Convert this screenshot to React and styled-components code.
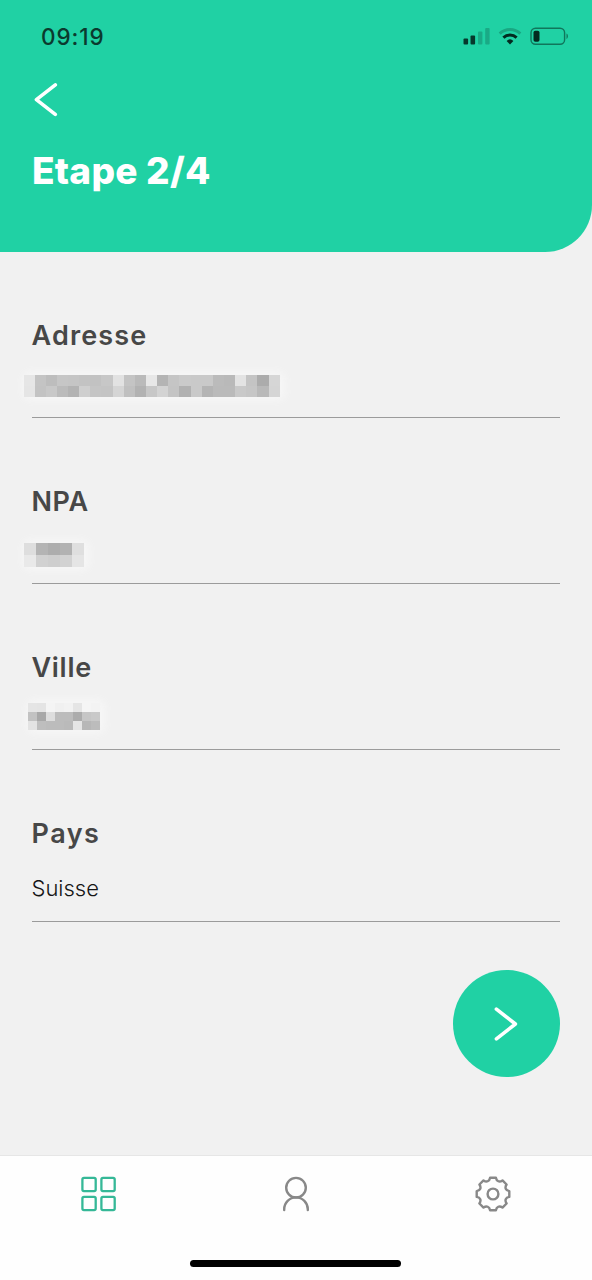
import React from 'react'
import styled, { createGlobalStyle } from 'styled-components';

const GREEN = '#20d1a4'

const GlobalStyle = createGlobalStyle`
  * {
    box-sizing: border-box;
  }
  body {
    margin: 0;
    background-color: #f1f1f1;
    font-family: Inter, "Liberation Sans", sans-serif;
  }
  button {
    border: none;
    padding: 0;
    background: none;
    font: inherit;
  }
  svg {
    display: block;
  }
`

const Screen = styled.div`
  display: flex;
  flex-direction: column;
  height: 1280px;
  overflow: hidden;
`

const Header = styled.header`
  height: 252px;
  background-color: ${GREEN};
  border-bottom-right-radius: 47px;
`

const StatusBar = styled.div`
  display: flex;
  justify-content: space-between;
  height: 83px;
  padding: 24px 23px 0 41px;
`

const Time = styled.div`
  color: #0b3a2e;
  font-size: 22.5px;
  font-weight: 500;
  line-height: 26px;
  letter-spacing: 0.9px;
`

const BackButton = styled.button`
  display: block;
  margin-left: 34px;
`

const Title = styled.h1`
  margin: 32px 0 0 32px;
  color: #fff;
  font-size: 37px;
  font-weight: 800;
  line-height: 44px;
  letter-spacing: 0.25px;
`

const Form = styled.main`
  flex: 1;
  padding: 0 32.5px 0 31.5px;
`

const Field = styled.div`
  height: ${(props) => props.$height || 166}px;
  padding-top: 67px;
  border-bottom: 1px solid #9b9b9b;
`

const Label = styled.div`
  color: #474747;
  font-size: 27px;
  font-weight: 600;
  line-height: 34px;
  letter-spacing: ${(props) => props.$spacing}px;
`

const Value = styled.div`
  margin-top: 23px;
  color: #151515;
  font-size: 22px;
  font-weight: 300;
  line-height: 28px;
`

// value hidden behind a mosaic of grey cells
const Mosaic = styled.div`
  display: grid;
  width: max-content;
  grid-template-columns: repeat(${(props) => props.$cols}, ${(props) => props.$size}px);
  grid-auto-rows: ${(props) => props.$rowSize}px;
  margin: ${(props) => props.$top}px 0 0 ${(props) => props.$left}px;
  border-radius: 5px;
  box-shadow: 2px 0 7px 4px #f6f6f6;
  background-color: #f4f4f4;
`

const Cell = styled.span`
  background-color: ${(props) => props.$color};
`

const NextButton = styled.button`
  display: flex;
  align-items: center;
  justify-content: center;
  width: 107px;
  height: 107px;
  margin: 48px 0 0 auto;
  border-radius: 50%;
  background-color: ${GREEN};
`

const TabBar = styled.nav`
  display: flex;
  flex-direction: column;
  align-items: center;
  height: 125px;
  padding-right: 1px;
  border-top: 1px solid #e6e6e6;
  background-color: #fefefe;
`

const Tabs = styled.div`
  display: grid;
  grid-template-columns: repeat(3, 197px);
  width: 591px;
  height: 104px;
`

const Tab = styled.button`
  display: flex;
  justify-content: center;
  padding-top: 19px;
`

const HomeIndicator = styled.div`
  width: 211px;
  height: 7px;
  border-radius: 4px;
  background-color: #000;
`

const adresse = [
  ['#e6e6e6', '#c4c4c4', '#bdbdbd', '#c6c6c6', '#c5c5c5', '#c3c3c3', '#c2c2c2', '#c7c7c7', '#e2e2e2', '#c4c4c4', '#bababa', '#e7e7e7', '#b4b4b4', '#c5c5c5', '#cacaca', '#c9c9c9', '#c9c9c9', '#bbbbbb', '#b9b9b9', '#e3e3e3', '#c4c4c4', '#acacac', '#d6d6d6'],
  ['#e5e5e5', '#c3c3c3', '#c8c8c8', '#bbbbbb', '#b3b3b3', '#cfcfcf', '#c5c5c5', '#c4c4c4', '#d5d5d5', '#c0c0c0', '#b2b2b2', '#c7c7c7', '#d3d3d3', '#c4c4c4', '#b1b1b1', '#c9c9c9', '#b4b4b4', '#bababa', '#bababa', '#c9c9c9', '#c6c6c6', '#b9b9b9', '#d5d5d5'],
]

const npa = [
  ['#dedede', '#b4b4b4', '#adadad', '#b2b2b2', '#dfdfdf'],
  ['#e9e9e9', '#d1d1d1', '#cecece', '#d2d2d2', '#e5e5e5'],
]

const ville = [
  ['#e5e5e5', '#e4e4e4', '#f4f4f4', '#f0f0f0', '#f2f2f2', '#e5e5e5', '#f5f5f5', '#f3f3f3'],
  ['#c2c2c2', '#a8a8a8', '#dddddd', '#bcbcbc', '#bcbcbc', '#acacac', '#c6c6c6', '#c9c9c9'],
  ['#e3e3e3', '#bebebe', '#bcbcbc', '#bcbcbc', '#bababa', '#e5e5e5', '#b7b7b7', '#bcbcbc'],
]

function Masked({ rows, size, rowSize, top, left }) {
  return (
    <Mosaic $cols={rows[0].length} $size={size} $rowSize={rowSize || size} $top={top} $left={left}>
      {rows.flat().map((color, i) => <Cell key={i} $color={color} />)}
    </Mosaic>
  )
}

// one tooth of the gear, turned eight times round the centre
const tooth = [[-2.9, -16.3], [2.9, -16.3], [3.6, -12.6], [6.36, -11.45]]

function gearPath() {
  let d = ''
  for (let i = 0; i < 8; i++) {
    const a = (i * Math.PI) / 4
    const [p, q, c1, c2] = tooth.map(([x, y]) =>
      `${(19 + x * Math.cos(a) - y * Math.sin(a)).toFixed(2)} ${(19 + x * Math.sin(a) + y * Math.cos(a)).toFixed(2)}`)
    d += `${i === 0 ? 'M' : ''}${p}L${q}C${c1} ${c2} `
  }
  return d + tooth[0].map((n) => (19 + n).toFixed(2)).join(' ') + 'z'
}

function StatusIcons() {
  return (
    <svg width="106" height="24" viewBox="0 0 106 24" fill="none">
      <g fill="#06382c">
        <rect x="0.5" y="14.5" width="4.6" height="6" rx="1" />
        <rect x="7.5" y="11.5" width="4.6" height="9" rx="1" />
        <rect x="15" y="7.5" width="4.4" height="13" rx="1" opacity="0.25" />
        <rect x="22.2" y="4" width="4.4" height="16.5" rx="1" opacity="0.25" />
      </g>
      <path d="M36.7 9.7a15 15 0 0 1 20.6 0" stroke="#06382c" strokeWidth="3" opacity="0.28" />
      <path d="M40.4 13.7a9.6 9.6 0 0 1 13.2 0" stroke="#032a20" strokeWidth="3" />
      <path d="M43.6 16.9a5 5 0 0 1 6.8 0L47 20.5z" fill="#032a20" />
      <rect x="68" y="4.3" width="33.6" height="16" rx="4.5" stroke="#06382c" strokeWidth="1.4" opacity="0.6" />
      <rect x="70.5" y="6.8" width="6" height="11" rx="1.8" fill="#032a20" />
      <path d="M103.5 9.6c1.9.7 1.9 4.7 0 5.4z" fill="#06382c" opacity="0.6" />
    </svg>
  )
}

function App() {
  return (
    <>
      <GlobalStyle />
      <Screen>
        <Header>
          <StatusBar>
            <Time>09:19</Time>
            <StatusIcons />
          </StatusBar>
          <BackButton aria-label="Retour">
            <svg width="24" height="34" viewBox="0 0 24 34" fill="none" stroke="#fff" strokeWidth="3.6" strokeLinecap="round" strokeLinejoin="round">
              <path d="M21.3 1.9 2.4 16.6 21.3 31.4" />
            </svg>
          </BackButton>
          <Title>Etape 2/4</Title>
        </Header>

        <Form>
          <Field>
            <Label $spacing={1.15}>Adresse</Label>
            <Masked rows={adresse} size={11.15} rowSize={11} top={22} left={-8} />
          </Field>
          <Field>
            <Label $spacing={0.6}>NPA</Label>
            <Masked rows={npa} size={12.2} rowSize={12} top={24} left={-8} />
          </Field>
          <Field>
            <Label $spacing={0.7}>Ville</Label>
            <Masked rows={ville} size={9} top={18} left={-3.5} />
          </Field>
          <Field $height={172}>
            <Label $spacing={1.5}>Pays</Label>
            <Value>Suisse</Value>
          </Field>
          <NextButton aria-label="Suivant">
            <svg width="24" height="34" viewBox="0 0 24 34" fill="none" stroke="#fff" strokeWidth="3.6" strokeLinecap="round" strokeLinejoin="round">
              <path d="M2.4 2.2 21.4 17 2.4 31.8" />
            </svg>
          </NextButton>
        </Form>

        <TabBar>
          <Tabs>
            <Tab aria-label="Accueil">
              <svg width="38" height="38" viewBox="0 0 38 38" fill="none" stroke="#35b897" strokeWidth="2.3">
                <rect x="2.4" y="2.9" width="13.3" height="13.3" rx="1.6" />
                <rect x="21.4" y="2.9" width="13.3" height="13.3" rx="1.6" />
                <rect x="2.4" y="21.9" width="13.3" height="13.3" rx="1.6" />
                <rect x="21.4" y="21.9" width="13.3" height="13.3" rx="1.6" />
              </svg>
            </Tab>
            <Tab aria-label="Profil">
              <svg width="38" height="38" viewBox="0 0 38 38" fill="none" stroke="#888" strokeWidth="2.4" strokeLinecap="round">
                <circle cx="19" cy="12.7" r="9.8" />
                <path d="M7.2 35v-.8a11.8 11.8 0 0 1 23.6 0v.8" />
              </svg>
            </Tab>
            <Tab aria-label="Réglages">
              <svg width="38" height="38" viewBox="0 0 38 38" fill="none" stroke="#888" strokeWidth="2.4" strokeLinejoin="round">
                <circle cx="19" cy="19" r="5.4" />
                <path d={gearPath()} />
              </svg>
            </Tab>
          </Tabs>
          <HomeIndicator />
        </TabBar>
      </Screen>
    </>
  )
}

export default App
